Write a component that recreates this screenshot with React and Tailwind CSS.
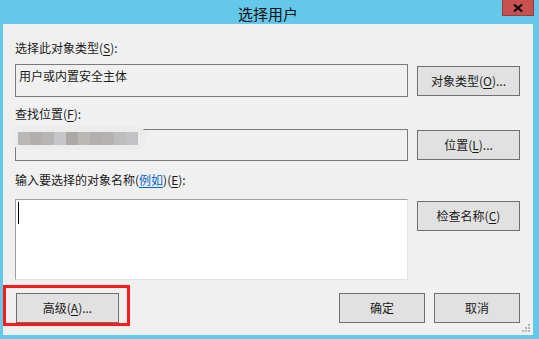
import React from "react";

const font = { fontFamily: '"Noto Sans CJK SC", "Liberation Sans", sans-serif' };

const blur = ["#bab8b6", "#b2b0ae", "#b6b5b4", "#c6c6c8", "#aca9a5", "#bab8b5", "#b2b0ae", "#b5b3b1", "#bdbdbd", "#c2c2c4"];

function Btn({ children, className = "", w = "w-[103px]" }) {
  return (
    <button className={"h-[30px] border border-[#707070] bg-[#e1e1e1] text-[12px] text-[#1a1a1a] leading-none " + w + " " + className}>
      {children}
    </button>
  );
}

function U({ children }) {
  return <span className="underline underline-offset-2">{children}</span>;
}

export default function App() {
  return (
    <div className="w-[539px] h-[339px] bg-[#63c8ea] flex flex-col pl-[3px] pr-[6px] pb-[4px]" style={font}>
      <div className="h-[24px] relative flex items-center justify-center">
        <span className="text-[15px] text-[#111] leading-none mt-[2px]">选择用户</span>
        <div className="absolute top-0 right-[-1px] w-[32px] h-[16px] bg-[#c75050] border border-[#9a3a3a] border-t-0 flex items-center justify-center">
          <svg width="10" height="8" viewBox="0 0 10 8">
            <path d="M1 0.5 L9 7.5 M9 0.5 L1 7.5" stroke="#000" strokeWidth="2" />
          </svg>
        </div>
      </div>

      <div className="flex-1 bg-[#f0f0f0] relative pl-[12px] pr-[13px] pt-[16px] text-[12px] text-[#1a1a1a]">
        <div className="h-[16px] leading-[16px]">选择此对象类型(<U>S</U>):</div>
        <div className="mt-[8px] flex items-center gap-[9px]">
          <div className="w-[393px] h-[33px] border border-[#7a7a7a] bg-[#f0f0f0] px-[3px] pt-[3px] leading-[16px]">用户或内置安全主体</div>
          <Btn>对象类型(<U>O</U>)...</Btn>
        </div>

        <div className="mt-[9px] h-[16px] leading-[16px]">查找位置(<U>F</U>):</div>
        <div className="mt-[7px] flex items-center gap-[9px]">
          <div className="w-[393px] h-[32px] border border-[#7a7a7a] bg-[#f0f0f0] relative">
            <div className="absolute left-[-4px] top-[-4px] w-[134px] h-[24px] rounded-[10px] bg-[#ececec] flex items-center pl-[6px]">
              {blur.map((c, i) => (
                <div key={i} className="w-[12px] h-[13px]" style={{ backgroundColor: c }} />
              ))}
            </div>
          </div>
          <Btn>位置(<U>L</U>)...</Btn>
        </div>

        <div className="mt-[11px] h-[16px] leading-[16px]">
          输入要选择的对象名称(<span className="text-[#0066cc] underline underline-offset-2">例如</span>)(<U>E</U>):
        </div>
        <div className="mt-[11px] flex items-start gap-[9px]">
          <div className="w-[393px] h-[81px] bg-white border border-[#a0a0a0] border-r-[#e3e3e3] border-b-[#e3e3e3] relative">
            <div className="absolute left-[2px] top-[2px] w-px h-[22px] bg-black" />
          </div>
          <Btn className="mt-[2px]">检查名称(<U>C</U>)</Btn>
        </div>

        <div className="mt-[13px] flex items-center">
          <Btn className="ml-[1px]">高级(<U>A</U>)...</Btn>
          <div className="flex-1" />
          <Btn w="w-[86px]">确定</Btn>
          <Btn w="w-[86px]" className="ml-[9px]">取消</Btn>
        </div>

        <div className="absolute left-0 top-[261px] w-[127px] h-[41px] border-[3px] border-[#ff1a1a]" />

        <svg className="absolute right-[2px] bottom-[2px]" width="10" height="10" viewBox="0 0 10 10">
          {[[7, 1], [4, 4], [7, 4], [1, 7], [4, 7], [7, 7]].map(([x, y], i) => (
            <rect key={i} x={x} y={y} width="2" height="2" fill="#b5b5b5" />
          ))}
        </svg>
      </div>
    </div>
  );
}
